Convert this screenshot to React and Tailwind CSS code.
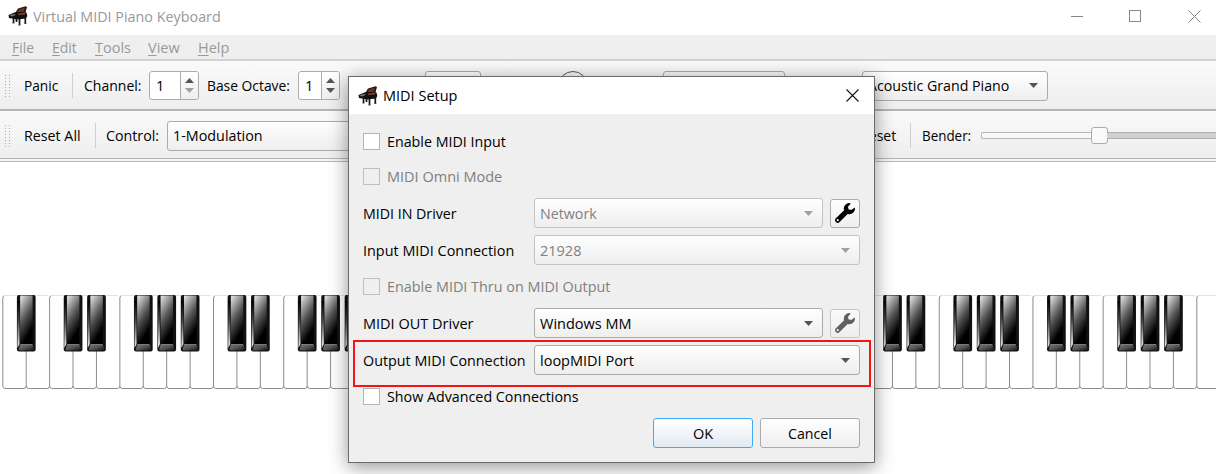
import { useLayoutEffect, useRef, useState } from "react";

// Text fitted horizontally to a fixed advance width.
function Fit({ w, children, className = "" }) {
  const ref = useRef(null);
  const [scale, setScale] = useState(1);
  useLayoutEffect(() => {
    setScale(w / ref.current.offsetWidth);
  }, [w]);
  return (
    <span className={"block shrink-0 whitespace-nowrap pt-px " + className} style={{ width: w }}>
      <span ref={ref} className="inline-block origin-left" style={{ transform: `scaleX(${scale})` }}>
        {children}
      </span>
    </span>
  );
}

function PianoIcon() {
  return (
    <svg className="block h-5 w-5 shrink-0" viewBox="0 0 20 20">
      <path d="M7.5 6.5 L10 2.5 L17.5 .2 L19 1 L17 8 L9 8.5Z" fill="#2a1410" />
      <path d="M9 6 L11 3.2 L17 1.4 L15.5 6.2Z" fill="#6b3020" />
      <path d="M.5 9 L7 6.2 L18.5 6.5 L19.3 10 L18 12.5 L9 13.5 L1 12Z" fill="#111" />
      <path d="M1.5 9.4 L5.5 8 L8 8.8 L4 10.4Z" fill="#777" />
      <path d="M10 8.2 L17 7.6" stroke="#a5603c" strokeWidth="1.1" />
      <path d="M5.5 12.5V17M8.5 13V16M11.5 13V19M17.3 12V17.5" stroke="#161616" strokeWidth="1.7" />
      <path d="M4.5 17h2M10.5 19h2M16.3 17.5h2" stroke="#444" strokeWidth="1" />
    </svg>
  );
}

function Wrench({ className }) {
  return (
    <svg className={"h-5 w-5 " + className} viewBox="0 0 20 20" fill="currentColor">
      <path
        fillRule="evenodd"
        d="M15.8 .4 A5.4 5.4 0 0 0 9.1 7.3 L.9 15.2 A2.5 2.5 0 0 0 4.6 19 L12.7 10.9 A5.4 5.4 0 0 0 19.8 4.6 L16.2 7 L13.5 6.2 L13 3.7Z M2.7 16.1 a1.1 1.1 0 1 1 0 2.2 a1.1 1.1 0 0 1 0-2.2Z"
      />
    </svg>
  );
}

function Arrow({ up, className = "" }) {
  return (
    <svg className={"block h-[5px] w-[9px] shrink-0 " + className} viewBox="0 0 9 5" fill="currentColor">
      <path d={up ? "M0 5L4.5 0L9 5Z" : "M0 0H9L4.5 5Z"} />
    </svg>
  );
}

function Combo({ className = "", textW, disabled, children }) {
  return (
    <div
      className={
        "flex h-[30px] items-center justify-between rounded-[3px] border bg-linear-to-b from-white to-[#eeeeee] pl-[5px] pr-[9px] " +
        (disabled ? "border-[#c3c3c3] text-[#808080] " : "border-[#ababab] text-black ") +
        className
      }
    >
      <Fit w={textW}>{children}</Fit>
      <Arrow className={disabled ? "text-[#a0a0a0]" : "text-[#555]"} />
    </div>
  );
}

function Spin({ className, atMin }) {
  return (
    <div className={"flex h-[29px] overflow-hidden rounded-[3px] border border-[#ababab] bg-white " + className}>
      <div className="flex flex-1 items-center pl-[6px]">
        <Fit w={8}>1</Fit>
      </div>
      <div className="flex w-[18px] flex-col items-center justify-between border-l border-[#ababab] bg-linear-to-b from-white to-[#eeeeee] py-[6px]">
        <Arrow up className="text-[#555]" />
        <Arrow className={atMin ? "text-[#a0a0a0]" : "text-[#555]"} />
      </div>
    </div>
  );
}

function Check({ disabled, textW, children }) {
  return (
    <div className={"flex h-[17px] items-center gap-[7px] " + (disabled ? "text-[#808080]" : "text-black")}>
      <span className={"h-[17px] w-[17px] border " + (disabled ? "border-[#c0c0c0]" : "border-[#b5b5b5] bg-white")} />
      <Fit w={textW}>{children}</Fit>
    </div>
  );
}

function Handle() {
  return (
    <svg className="block h-[22px] w-[6px] shrink-0" viewBox="0 0 6 22">
      {[0, 3, 6, 9, 12, 15, 18, 21].map((y) => (
        <path key={y} d={`M0 ${y + 0.5}h1M4 ${y + 0.5}h1`} stroke="#aaa" />
      ))}
    </svg>
  );
}

const PITCH = 23.412;
const START = 2.8;

function Keyboard() {
  const whites = Array.from({ length: 52 }, (_, i) => START + i * PITCH);
  const blacks = [];
  for (let b = 1; b < 52; b++) if (b % 7 !== 2 && b % 7 !== 5) blacks.push(START + b * PITCH - 9.3);
  return (
    <svg className="block h-[96px] w-full" viewBox="0 0 1216 96">
      <defs>
        <linearGradient id="face" x1="0.2" y1="0" x2="0.6" y2="1">
          <stop offset="0" stopColor="#d8d8d8" />
          <stop offset="0.45" stopColor="#555" />
          <stop offset="0.85" stopColor="#000" />
        </linearGradient>
        <linearGradient id="side" x1="0" y1="0" x2="0" y2="1">
          <stop offset="0" stopColor="#000" />
          <stop offset="0.4" stopColor="#444" />
          <stop offset="1" stopColor="#f2f2f2" />
        </linearGradient>
        <linearGradient id="lip" x1="0" y1="0" x2="1" y2="1">
          <stop offset="0" stopColor="#777" />
          <stop offset="0.5" stopColor="#555" />
          <stop offset="1" stopColor="#111" />
        </linearGradient>
      </defs>
      {whites.map((x) => (
        <g key={x} fill="none">
          <path d={`M${x + 2} .5H${x + PITCH - 2}`} stroke="#e2e2e2" />
          <path
            d={`M${x + 1.6} .8Q${x} 1 ${x} 3V91Q${x + 0.4} 93.5 ${x + 2.2} 93.5H${x + PITCH - 2.2}Q${x + PITCH - 0.4} 93.5 ${x + PITCH} 91`}
            stroke="#808080"
            strokeWidth=".9"
          />
        </g>
      ))}
      {blacks.map((x) => (
        <g key={x} transform={`translate(${x} 0)`}>
          <rect width="18.7" height="56.5" rx="2" fill="#111" />
          <path d="M.6 6H2.6V49L.6 53Z" fill="url(#side)" />
          <rect x="3.2" y=".5" width="12.5" height="49" fill="url(#face)" />
          <path d="M3.2 49.5H15.7L17.2 54.5Q17 55.5 16 55.5H3Q2 55.5 1.7 54.5Z" fill="url(#lip)" />
          <path d="M3.5 49.5H15.5" stroke="#999" strokeWidth=".7" />
        </g>
      ))}
    </svg>
  );
}

function MenuItem({ label, w, className = "" }) {
  return (
    <Fit w={w} className={className}>
      <span className="underline underline-offset-2">{label[0]}</span>
      {label.slice(1)}
    </Fit>
  );
}

function Dialog() {
  return (
    <div className="absolute left-[348px] top-[76px] flex h-[387px] w-[527px] flex-col border border-[#6c6c6c] bg-[#efefef] shadow-[0_4px_18px_rgba(0,0,0,0.42)]">
      <div className="flex h-[37px] shrink-0 items-center bg-white pl-[9px] pr-[15px]">
        <PianoIcon />
        <Fit w={74} className="ml-[5px]">MIDI Setup</Fit>
        <svg className="ml-auto block h-[13px] w-[13px]" viewBox="0 0 13 13" stroke="#111" strokeWidth="1.1">
          <path d="M.5 .5L12.5 12.5M12.5 .5L.5 12.5" />
        </svg>
      </div>
      <div className="flex flex-col pl-[14px] pr-[14px] pt-[19px]">
        <Check textW={119}>Enable MIDI Input</Check>
        <div className="mt-[18px]"><Check disabled textW={115}>MIDI Omni Mode</Check></div>
        <div className="mt-[13px] flex items-center">
          <Fit w={94}>MIDI IN Driver</Fit>
          <Combo disabled textW={57} className="ml-auto w-[289px]">Network</Combo>
          <div className="ml-[7px] flex h-[29px] w-[30px] items-center justify-center rounded-[3px] border border-[#ababab] bg-linear-to-b from-white to-[#eee] pb-px">
            <Wrench className="text-black" />
          </div>
        </div>
        <div className="mt-[7px] flex items-center justify-between">
          <Fit w={151}>Input MIDI Connection</Fit>
          <Combo disabled textW={41} className="w-[326px]">21928</Combo>
        </div>
        <div className="mt-[13px]"><Check disabled textW={223}>Enable MIDI Thru on MIDI Output</Check></div>
        <div className="mt-[13px] flex items-center">
          <Fit w={110}>MIDI OUT Driver</Fit>
          <Combo textW={92} className="ml-auto w-[289px]">Windows MM</Combo>
          <div className="ml-[7px] flex h-[29px] w-[30px] items-center justify-center rounded-[3px] border border-[#c6c6c6] bg-linear-to-b from-[#fafafa] to-[#eee] pb-px">
            <Wrench className="text-[#606060]" />
          </div>
        </div>
        <div className="mt-[7px] flex items-center justify-between">
          <Fit w={163}>Output MIDI Connection</Fit>
          <Combo textW={94} className="w-[326px]">loopMIDI Port</Combo>
        </div>
        <div className="mt-[13px]"><Check textW={192}>Show Advanced Connections</Check></div>
        <div className="mt-[13px] flex justify-end gap-[7px]">
          <div className="flex h-[30px] w-[100px] items-center justify-center rounded-[3px] border border-[#3daaf8] bg-linear-to-b from-white to-[#e3eaf1]">
            <Fit w={20}>OK</Fit>
          </div>
          <div className="flex h-[30px] w-[100px] items-center justify-center rounded-[3px] border border-[#ababab] bg-linear-to-b from-white to-[#eee]">
            <Fit w={44}>Cancel</Fit>
          </div>
        </div>
      </div>
      <div className="absolute left-[4px] top-[263px] h-[47px] w-[518px] border-2 border-[#f51414]" />
    </div>
  );
}

export default function App() {
  return (
    <div className="relative flex h-[474px] w-[1216px] flex-col overflow-hidden bg-white font-['Open_Sans','Noto_Sans',sans-serif] text-[14.5px] leading-[20px] text-black">
      <div className="flex h-[35px] shrink-0 items-center pb-[3px] pl-[8px] pr-[15px]">
        <PianoIcon />
        <Fit w={188} className="ml-[5px] text-[#999]">Virtual MIDI Piano Keyboard</Fit>
        <svg className="ml-auto block h-[13px] w-[130px]" viewBox="0 0 130 13" fill="none" stroke="#888">
          <path d="M0 6.5H12M117.5 .5L129.5 12.5M129.5 .5L117.5 12.5" />
          <rect x="58.5" y=".5" width="11" height="11" />
        </svg>
      </div>
      <div className="flex h-[26px] shrink-0 items-center border-b-2 border-[#d3d3d3] bg-[#efefef] pl-[12px] pt-px text-[#999]">
        <MenuItem label="File" w={22} />
        <MenuItem label="Edit" w={25} className="ml-[18px]" />
        <MenuItem label="Tools" w={36} className="ml-[18px]" />
        <MenuItem label="View" w={32} className="ml-[17px]" />
        <MenuItem label="Help" w={31} className="ml-[18px]" />
      </div>
      <div className="flex h-[50px] shrink-0 items-center border-b-2 border-[#b4b4b4] bg-linear-to-b from-[#fafafa] to-[#eee] pl-[5px] pt-[1px]">
        <Handle />
        <Fit w={34} className="ml-[13px]">Panic</Fit>
        <span className="ml-[14px] h-[25px] w-px bg-[#cfcfcf]" />
        <Fit w={57} className="ml-[11px]">Channel:</Fit>
        <Spin atMin className="ml-[8px] w-[50px]" />
        <Fit w={83} className="ml-[8px]">Base Octave:</Fit>
        <Spin className="ml-[8px] w-[42px]" />
        <span className="ml-[85px] h-[30px] w-[56px] rounded-[3px] border border-[#ababab] bg-white" />
        <span className="ml-[77px] h-[30px] w-[30px] rounded-full border border-[#555]" />
        <span className="ml-[75px] h-[30px] w-[122px] rounded-[3px] border border-[#ababab]" />
        <Combo textW={141} className="ml-[77px] w-[186px]">Acoustic Grand Piano</Combo>
      </div>
      <div className="flex h-[48px] shrink-0 items-center border-b border-[#b4b4b4] bg-linear-to-b from-[#fafafa] to-[#eee] pl-[5px] pt-[2px]">
        <Handle />
        <Fit w={57} className="ml-[13px]">Reset All</Fit>
        <span className="ml-[14px] h-[25px] w-px bg-[#cfcfcf]" />
        <Fit w={53} className="ml-[10px]">Control:</Fit>
        <Combo textW={90} className="ml-[8px] w-[230px]">1-Modulation</Combo>
        <Fit w={36} className="ml-[463px]">Reset</Fit>
        <span className="ml-[14px] h-[25px] w-px bg-[#cfcfcf]" />
        <Fit w={49} className="ml-[11px]">Bender:</Fit>
        <div className="ml-[10px] flex flex-1 items-center">
          <span className="h-[7px] w-[111px] rounded-l-[2px] border border-r-0 border-[#b5b5b5] bg-[#f8f8f8]" />
          <span className="-mx-px h-[17px] w-[17px] rounded-[3px] border border-[#ababab] bg-[#fafafa]" />
          <span className="h-[7px] flex-1 border-y border-[#b0b0b0] bg-[#d0d0d0]" />
        </div>
      </div>
      <div className="h-[3px] shrink-0 border-b border-[#b8b8b8] bg-[#f5f5f5]" />
      <div className="pt-[133px]">
        <Keyboard />
      </div>
      <Dialog />
    </div>
  );
}
